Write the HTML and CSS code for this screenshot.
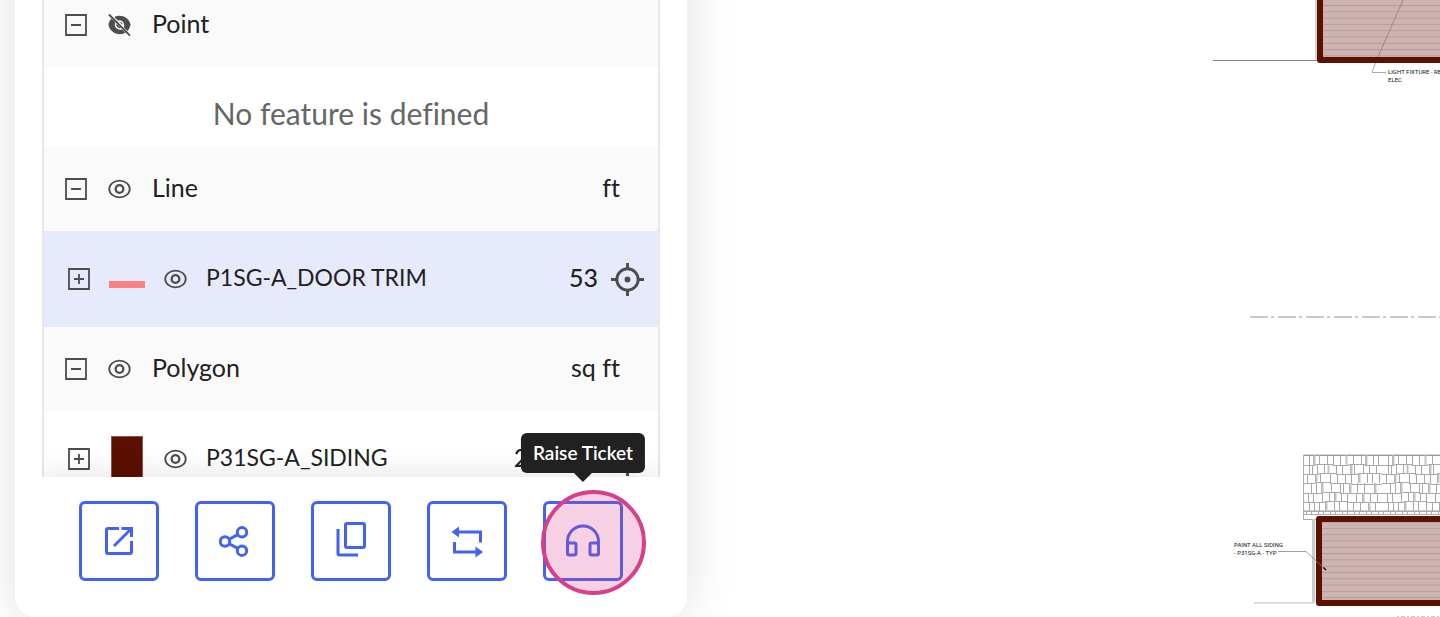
FILE: index.html
```
<!DOCTYPE html>
<html lang="en">
<head>
  <meta charset="UTF-8">
  <title>Features</title>
  <link rel="stylesheet" href="styles.css">
</head>
<body>
  <svg class="icon-defs" aria-hidden="true">
    <symbol id="icon-minus" viewBox="0 0 22 22">
      <path d="M1 1h20v20H1zM6 11h10" fill="none" stroke="currentColor" stroke-width="1.8"/>
    </symbol>
    <symbol id="icon-plus" viewBox="0 0 22 22">
      <path d="M1 1h20v20H1zM6 11h10M11 6v10" fill="none" stroke="currentColor" stroke-width="1.8"/>
    </symbol>
    <symbol id="icon-eye" viewBox="0 0 24 24">
      <ellipse cx="12" cy="11.500" rx="10.700" ry="8.700" fill="none" stroke="currentColor" stroke-width="1.900"/>
      <circle cx="12" cy="11.500" r="4" fill="none" stroke="currentColor" stroke-width="2.400"/>
    </symbol>
    <symbol id="icon-eye-off" viewBox="0 0 24 24">
      <path d="M7.500 2.700C14 .3 22 3.500 23.500 11C23 14 21.800 16.100 20.200 17.700L16.600 14.100C18.200 9.500 14.500 5.700 10.300 6.800L6.800 3.300zM3.600 4.700L7.500 8.700C5.700 13.500 10 17.800 14.800 16.100L18.300 19.600C11 23.300 1.800 19.500 .5 11.300C.9 8.500 2 6.300 3.600 4.700z" fill="currentColor"/>
      <path d="M8.800 10L13.500 14.700C10.700 15.300 8.200 12.900 8.800 10zM12 8.100c2 0 3.300 1.400 3.300 3.200z" fill="currentColor"/>
      <path d="M1 .5l22 22" stroke="currentColor" stroke-width="2"/>
    </symbol>
    <symbol id="icon-target" viewBox="0 0 34 34">
      <circle cx="17" cy="17" r="11" fill="none" stroke="currentColor" stroke-width="3"/>
      <circle cx="17" cy="17" r="3"/>
      <path d="M17 0v6M17 28v6M0 17h6M28 17h6" stroke="currentColor" stroke-width="3"/>
    </symbol>
  </svg>

  <aside class="panel">
    <div class="feature-list">
      <div class="group-row">
        <button class="icon-btn" aria-label="Collapse Point"><svg class="toggle"><use href="#icon-minus"/></svg></button>
        <button class="icon-btn" aria-label="Show Point"><svg class="eye"><use href="#icon-eye-off"/></svg></button>
        <span class="name">Point</span>
      </div>
      <p class="empty">No feature is defined</p>
      <div class="group-row">
        <button class="icon-btn" aria-label="Collapse Line"><svg class="toggle"><use href="#icon-minus"/></svg></button>
        <button class="icon-btn" aria-label="Hide Line"><svg class="eye"><use href="#icon-eye"/></svg></button>
        <span class="name">Line</span>
        <span class="value">ft</span>
      </div>
      <div class="item-row selected">
        <button class="icon-btn" aria-label="Expand door trim"><svg class="toggle"><use href="#icon-plus"/></svg></button>
        <span class="swatch"><span class="swatch-line"></span></span>
        <button class="icon-btn" aria-label="Hide door trim"><svg class="eye"><use href="#icon-eye"/></svg></button>
        <span class="name">P1SG-A_DOOR TRIM</span>
        <span class="value">53</span>
        <button class="icon-btn" aria-label="Locate door trim"><svg class="target"><use href="#icon-target"/></svg></button>
      </div>
      <div class="group-row">
        <button class="icon-btn" aria-label="Collapse Polygon"><svg class="toggle"><use href="#icon-minus"/></svg></button>
        <button class="icon-btn" aria-label="Hide Polygon"><svg class="eye"><use href="#icon-eye"/></svg></button>
        <span class="name">Polygon</span>
        <span class="value">sq ft</span>
      </div>
      <div class="item-row">
        <button class="icon-btn" aria-label="Expand siding"><svg class="toggle"><use href="#icon-plus"/></svg></button>
        <span class="swatch"><span class="swatch-area"></span></span>
        <button class="icon-btn" aria-label="Hide siding"><svg class="eye"><use href="#icon-eye"/></svg></button>
        <span class="name">P31SG-A_SIDING</span>
        <span class="value">2,200.0</span>
        <button class="icon-btn" aria-label="Locate siding"><svg class="target"><use href="#icon-target"/></svg></button>
      </div>
    </div>

    <div class="toolbar">
      <button class="tool" aria-label="Open">
        <svg viewBox="0 0 40 40"><path d="M20 7.500H9Q7.500 7.500 7.500 9V31Q7.500 32.500 9 32.500H31Q32.500 32.500 32.500 31V20M15 25L31 9" /><path d="M22.500 6H34V16H31V9H22.500z" class="solid"/></svg>
      </button>
      <button class="tool" aria-label="Share">
        <svg viewBox="0 0 40 40"><circle cx="10" cy="20.500" r="4.700"/><circle cx="27" cy="11.300" r="4.700"/><circle cx="27" cy="29.700" r="4.700"/><path d="M14.200 18.200l8.600-4.600M14.200 22.800l8.600 4.600"/></svg>
      </button>
      <button class="tool" aria-label="Copy">
        <svg viewBox="0 0 40 40"><rect x="14.500" y="2.500" width="19" height="24" rx="1.500"/><path d="M7 8V32.500Q7 34 8.500 34H27"/></svg>
      </button>
      <button class="tool" aria-label="Swap">
        <svg viewBox="0 0 40 40"><path d="M10 11H33.500V21.500M7.500 21V31H32"/><path d="M4.500 11L12 5.500V16.500zM36 31L28.500 25.500V36.500z" class="solid"/></svg>
      </button>
      <div class="tool-wrap">
        <button class="tool" aria-describedby="ticket-tip" aria-label="Raise Ticket">
          <svg viewBox="0 0 40 40"><path d="M4.500 22.500V20.500A15.500 15.500 0 0 1 35.500 20.500V22.500"/><path d="M4.500 22H11.500Q13 22 13 23.500V32.500Q13 34 11.500 34H6Q4.500 34 4.500 32.500zM35.500 22H28.500Q27 22 27 23.500V32.500Q27 34 28.500 34H34Q35.500 34 35.500 32.500z"/></svg>
        </button>
        <span class="tooltip" id="ticket-tip" role="tooltip">Raise Ticket</span>
        <span class="click-ring"></span>
      </div>
    </div>
  </aside>

  <main class="canvas">
    <svg class="drawing" viewBox="1200 0 240 617" preserveAspectRatio="xMaxYMin meet">
      <defs>
        <pattern id="siding" x="0" y="5" width="20" height="6.300" patternUnits="userSpaceOnUse">
          <path d="M0 .5H20" stroke="#b59c98"/>
        </pattern>
        <pattern id="shingles" x="1303" y="455" width="79" height="56" patternUnits="userSpaceOnUse">
          <g fill="none" stroke="#a8a8a8" stroke-width="1">
            <path d="M0 .5H79" stroke="#888"/>
            <path d="M0 10.500H12V9.500H30V10.500H46V9.500H62V10.500H79M0 19.500H16V18.500H33V19.500H55V18.500H79M0 28.500H12V27.500H27V28.500H49V29.500H79M0 38.500H19V37.500H37V38.500H79M0 47.500H22V46.500H44V47.500H79M0 56H79"/>
            <path d="M6.500 0v10M10.500 0v10M16.500 0v10M24.500 0v10M30.500 0v10M37.500 0v10M43.500 0v10M50.500 0v10M58.500 0v10M62.500 0v10M70.500 0v10M75.500 0v10"/>
            <path d="M6.500 10v9M9.500 10v9M14.500 10v9M21.500 10v9M25.500 10v9M33.500 10v9M39.500 10v9M47.500 10v9M51.500 10v9M60.500 10v9M66.500 10v9M73.500 10v9"/>
            <path d="M4.500 19v9M12.500 19v9M17.500 19v9M27.500 19v9M34.500 19v9M42.500 19v9M48.500 19v9M55.500 19v9M64.500 19v9M69.500 19v9M76.500 19v9"/>
            <path d="M8.500 28v10M13.500 28v10M18.500 28v10M28.500 28v10M37.500 28v10M40.500 28v10M46.500 28v10M54.500 28v10M61.500 28v10M71.500 28v10"/>
            <path d="M5.500 38v9M10.500 38v9M19.500 38v9M26.500 38v9M31.500 38v9M38.500 38v9M44.500 38v9M53.500 38v9M59.500 38v9M67.500 38v9M74.500 38v9"/>
            <path d="M6.500 47v9M11.500 47v9M16.500 47v9M22.500 47v9M31.500 47v9M36.500 47v9M44.500 47v9M50.500 47v9M57.500 47v9M65.500 47v9M72.500 47v9"/>
          </g>
          <path d="M11.500 0v10M25.500 10v9M43.500 0v10M63.500 0v10M13.500 19v9M48.500 10v9M56.500 19v9M19.500 28v10M47.500 28v10M72.500 28v10M32.500 38v9M60.500 38v9M23.500 47v9M66.500 47v9" stroke="#c4c4c4" stroke-width="2"/>
        </pattern>
      </defs>

      <!-- upper elevation -->
      <path d="M1213 60.500H1317" stroke="#888"/>
      <path d="M1316 0V60" stroke="#aaa"/>
      <rect x="1320" y="-20" width="140" height="80" fill="#cdb4b0"/>
      <rect x="1323" y="0" width="117" height="57" fill="url(#siding)"/>
      <path d="M1403 0L1378 57" stroke="#9d8582"/>
      <path d="M1320 -20V60H1460" fill="none" stroke="#5c1000" stroke-width="6" stroke-linejoin="round"/>
      <path d="M1375.500 63L1372 72.500H1386" fill="none" stroke="#aaa"/>
      <text x="1388" y="74" class="note">LIGHT FIXTURE - RE</text>
      <text x="1388" y="82" class="note">ELEC</text>

      <path d="M1250 317H1440" stroke="#c8c8c8" stroke-width="2" stroke-dasharray="18 3 3 4"/>

      <!-- lower elevation -->
      <rect x="1303" y="455" width="137" height="56" fill="url(#shingles)"/>
      <path d="M1440 455H1303.500V519.500H1317M1303 511.500H1440M1303 514.500H1440" fill="none" stroke="#aaa"/>
      <path d="M1306 513H1440" stroke="#aaa" stroke-width="3" stroke-dasharray="1 4 1 6"/>
      <path d="M1313.500 519V603" stroke="#ccc" stroke-width="3"/>
      <path d="M1254 603H1314" stroke="#ddd" stroke-width="2"/>
      <rect x="1319" y="519" width="140" height="84" fill="#cdb4b0"/>
      <rect x="1322" y="522" width="118" height="78" fill="url(#siding)"/>
      <path d="M1460 519H1319V603H1460" fill="none" stroke="#5c1000" stroke-width="6" stroke-linejoin="round"/>
      <path d="M1278 551.500H1306L1326 570" fill="none" stroke="#888" stroke-width=".8"/>
      <path d="M1323.500 567.500L1326 570" stroke="#111" stroke-width="1.500"/>
      <text x="1234" y="547" class="note">PAINT ALL SIDING</text>
      <text x="1234" y="555" class="note">- P31SG-A - TYP</text>
      <path d="M1397 616.500H1440" stroke="#ccc" stroke-dasharray="2 2 4 2"/>
    </svg>
  </main>
</body>
</html>
```
FILE: styles.css
```
* { box-sizing: border-box; margin: 0; padding: 0; }
body {
  display: flex;
  height: 100vh;
  overflow: hidden;
  font-family: Lato, "Liberation Sans", sans-serif;
  font-size: 25px;
  font-variant-ligatures: none;
  color: #212121;
  background: #fff;
}
button {
  font: inherit;
  color: inherit;
  background: none;
  border: none;
  cursor: pointer;
}
.icon-defs {
  position: absolute;
  width: 0;
  height: 0;
}

/* Side panel, its top edge is above the window */
.panel {
  flex: 0 1 672px;
  height: calc(100vh + 80px);
  margin: -80px 0 0 15px;
  padding: 0 27px;
  display: flex;
  flex-direction: column;
  background: #fff;
  border-radius: 20px;
  box-shadow: 0 0 50px rgba(0, 0, 0, 0.13);
}
.feature-list {
  flex: 1;
  min-height: 0;
  padding-top: 63px;
  overflow: hidden;
  border: solid #e8e8e8;
  border-width: 0 2px;
}
.group-row,
.item-row {
  display: flex;
  align-items: center;
}
.group-row {
  height: 84px;
  gap: 21px;
  padding: 0 38px 0 21px;
  background: #fafafa;
}
.item-row {
  height: 96px;
  gap: 19px;
  padding: 0 14px 0 24px;
}
.item-row.selected {
  background: #e7eafc;
}
.empty {
  height: 80px;
  padding-top: 12px;
  line-height: 68px;
  font-size: 30px;
  text-align: center;
  color: #666;
}
.name,
.value {
  padding-bottom: 4px;
  white-space: nowrap;
}
.name {
  flex: 1;
}
.item-row .name {
  font-size: 23px;
}
.item-row .value {
  margin-right: -6px;
  font-weight: 500;
}
.icon-btn {
  display: flex;
  color: #4d4d4d;
}
.toggle {
  width: 22px;
  height: 22px;
}
.eye {
  width: 23px;
  height: 23px;
}
.target {
  width: 33px;
  height: 33px;
  fill: currentColor;
}
.swatch {
  width: 36px;
  height: 46px;
  display: flex;
  justify-content: center;
}
.swatch-line {
  width: 36px;
  height: 7px;
  margin-top: 25px;
  background: #ff8080;
}
.swatch-area {
  width: 32px;
  height: 46px;
  background: #5c1000;
  border: 1px solid #8a5850;
}

/* Bottom toolbar */
.toolbar {
  display: flex;
  justify-content: center;
  gap: 36px;
  padding: 24px 0 36px;
  background: #fff;
  box-shadow: 0 0 30px rgba(0, 0, 0, 0.13);
  clip-path: inset(-60px 0 0 0);
  z-index: 1;
}
.tool {
  display: flex;
  align-items: center;
  justify-content: center;
  width: 80px;
  height: 80px;
  color: #4262f0;
  border: 3px solid currentColor;
  border-radius: 6px;
}
.tool svg {
  width: 40px;
  height: 40px;
  fill: none;
  stroke: currentColor;
  stroke-width: 3;
}
.tool .solid {
  fill: currentColor;
  stroke: none;
}
.tool-wrap {
  position: relative;
}
.tooltip {
  position: absolute;
  bottom: 108px;
  left: 50%;
  transform: translateX(-50%);
  padding: 0 12px;
  line-height: 40px;
  font-size: 19px;
  font-weight: 600;
  white-space: nowrap;
  color: #fff;
  background: #212121;
  border-radius: 6px;
}
.tooltip::after {
  content: "";
  position: absolute;
  top: 100%;
  left: 50%;
  margin-left: -9px;
  border: 9px solid transparent;
  border-top-color: #212121;
  border-bottom: none;
}
.click-ring {
  position: absolute;
  top: -11px;
  left: -2px;
  width: 105px;
  height: 105px;
  border: 4px solid #d63f8c;
  border-radius: 50%;
  background: rgba(214, 63, 140, 0.24);
  pointer-events: none;
}

/* Plan drawing */
.canvas {
  flex: 1;
  display: flex;
  justify-content: flex-end;
}
.drawing {
  height: 100vh;
}
.note {
  font-family: Roboto, "Liberation Sans", Arial, sans-serif;
  font-size: 6px;
  font-weight: 400;
  fill: #111;
}
```
